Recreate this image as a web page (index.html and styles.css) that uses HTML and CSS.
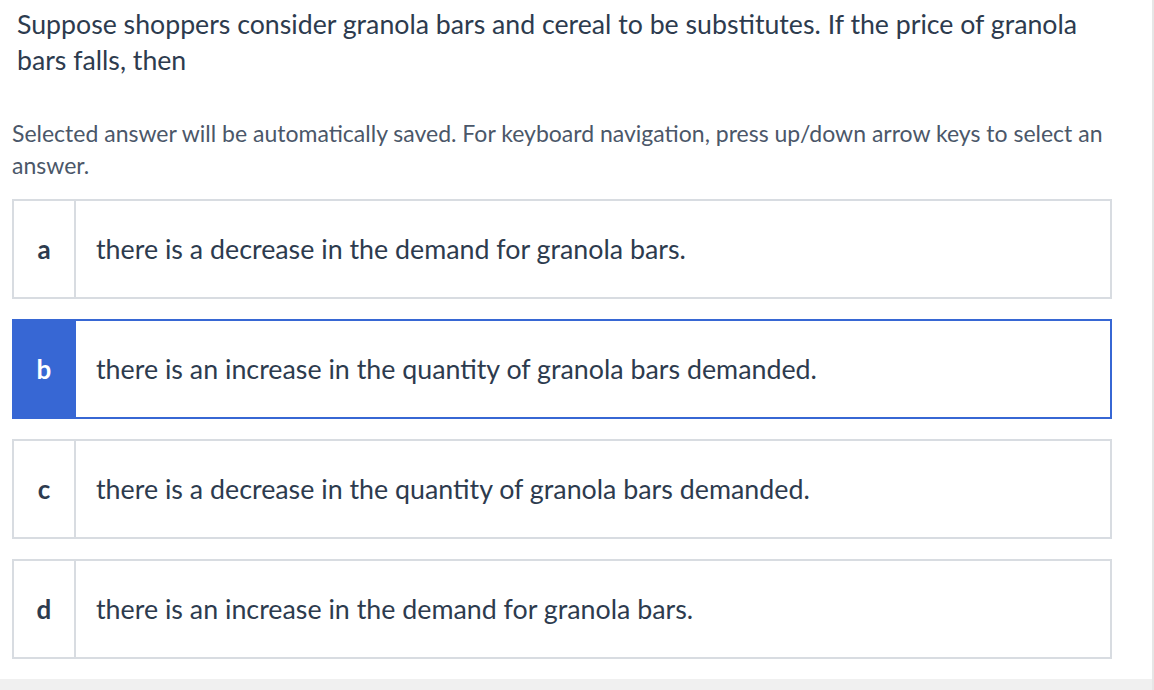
FILE: index.html
```html
<!DOCTYPE html>
<html lang="en">
<head>
<meta charset="utf-8">
<title>Question</title>
<link rel="stylesheet" href="styles.css">
</head>
<body>
<div class="page">
  <main class="content">
    <p class="question">Suppose shoppers consider granola bars and cereal to be substitutes. If the price of granola bars falls, then</p>
    <p class="hint">Selected answer will be automatically saved. For keyboard navigation, press up/down arrow keys to select an answer.</p>
    <div class="options" role="radiogroup">
      <div class="option" role="radio" aria-checked="false">
        <div class="letter">a</div>
        <div class="text">there is a decrease in the demand for granola bars.</div>
      </div>
      <div class="option selected" role="radio" aria-checked="true">
        <div class="letter">b</div>
        <div class="text">there is an increase in the quantity of granola bars demanded.</div>
      </div>
      <div class="option" role="radio" aria-checked="false">
        <div class="letter">c</div>
        <div class="text">there is a decrease in the quantity of granola bars demanded.</div>
      </div>
      <div class="option" role="radio" aria-checked="false">
        <div class="letter">d</div>
        <div class="text">there is an increase in the demand for granola bars.</div>
      </div>
    </div>
  </main>
  <div class="footer-band"></div>
</div>
</body>
</html>
```
FILE: styles.css
```css
html, body {
  margin: 0;
  padding: 0;
  background: #ffffff;
}
body {
  font-family: Lato, "Noto Sans", sans-serif;
  color: #2d3b4e;
}
.page {
  width: 1152px;
  border-right: 2px solid #e6e6e6;
  min-height: 690px;
  display: flex;
  flex-direction: column;
}
.content {
  padding: 6px 40px 0 12px;
}
.question {
  margin: 0;
  padding-left: 5px;
  font-size: 26.7px;
  line-height: 36px;
  color: #2d3b4e;
}
.hint {
  margin: 39px 0 0 0;
  font-size: 23px;
  line-height: 32px;
  color: #4b5769;
}
.options {
  margin-top: 18px;
  display: flex;
  flex-direction: column;
  gap: 20px;
  padding-bottom: 20px;
}
.option {
  display: flex;
  height: 100px;
  box-sizing: border-box;
  border: 2px solid #d8dce1;
  width: 1100px;
}
.letter {
  width: 60px;
  flex: none;
  border-right: 2px solid #d8dce1;
  display: flex;
  align-items: center;
  justify-content: center;
  font-weight: 700;
  font-size: 26px;
  color: #2d3b4e;
}
.text {
  display: flex;
  align-items: center;
  padding-left: 20px;
  font-size: 26.8px;
  color: #2d3b4e;
}
.option.selected {
  border-color: #3767d4;
}
.option.selected .letter {
  background: #3767d4;
  border-right-color: #3767d4;
  color: #ffffff;
}
.footer-band {
  flex: 1;
  background: #f0f0f0;
}
```
